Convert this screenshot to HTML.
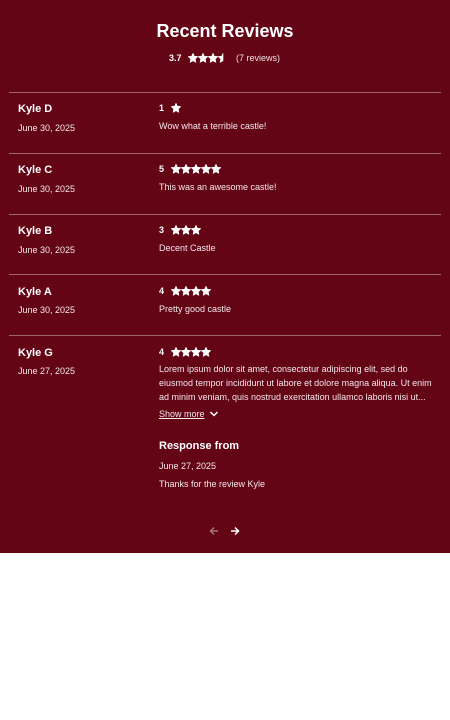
<!DOCTYPE html>
<html><head><meta charset="utf-8"><style>
*{margin:0;padding:0;box-sizing:border-box}
body{width:450px;height:720px;background:#fff;font-family:"Liberation Sans",Arial,sans-serif;position:relative;overflow:hidden}
#r{position:absolute;left:0;top:0;width:450px;height:553px;background:#640515;color:#fff}
.a{position:absolute;white-space:nowrap}
.hr{position:absolute;left:9px;width:432px;height:1px;background:#a0646c}
.n{font-size:11px;font-weight:bold;left:18px}
.d{font-size:9px;left:18px;color:#f4e8ea}
.s{font-size:9px;font-weight:bold;left:159px}
.c{font-size:9px;left:159px;color:#f4e8ea}
svg.st{position:absolute}
</style></head><body><div id="r">
<svg width="0" height="0" style="position:absolute"><defs><path id="st" d="M5 0.3L6.4 3.2 9.7 3.6 7.3 5.9 7.9 9.3 5 7.7 2.1 9.3 2.7 5.9 0.3 3.6 3.6 3.2Z" fill="#fff" stroke="#fff" stroke-width="0.6" stroke-linejoin="round"/></defs></svg>
<div class="a" style="left:0;width:450px;text-align:center;top:21px;font-size:18px;font-weight:bold">Recent Reviews</div>
<div class="a" style="left:169px;top:53px;font-size:9px;font-weight:bold">3.7</div>
<svg class="st" style="left:188px;top:53px" width="40" height="10"><use href="#st"/><use href="#st" x="10"/><use href="#st" x="20"/><path d="M35 0.3L33.6 3.2 30.3 3.6 32.7 5.9 32.1 9.3 35 7.7Z" fill="#fff" stroke="#fff" stroke-width="0.6" stroke-linejoin="round"/></svg>
<div class="a" style="left:236px;top:53px;font-size:9px;color:#f0e0e3">(7 reviews)</div>

<div class="hr" style="top:92px"></div>
<div class="a n" style="top:103px">Kyle D</div>
<div class="a d" style="top:123px">June 30, 2025</div>
<div class="a s" style="top:103px">1</div>
<svg class="st" style="left:171px;top:103px" width="50" height="10"><use href="#st"/></svg>
<div class="a c" style="top:121px">Wow what a terrible castle!</div>

<div class="hr" style="top:153px"></div>
<div class="a n" style="top:164px">Kyle C</div>
<div class="a d" style="top:184px">June 30, 2025</div>
<div class="a s" style="top:164px">5</div>
<svg class="st" style="left:171px;top:164px" width="50" height="10"><use href="#st"/><use href="#st" x="10"/><use href="#st" x="20"/><use href="#st" x="30"/><use href="#st" x="40"/></svg>
<div class="a c" style="top:182px">This was an awesome castle!</div>

<div class="hr" style="top:214px"></div>
<div class="a n" style="top:225px">Kyle B</div>
<div class="a d" style="top:245px">June 30, 2025</div>
<div class="a s" style="top:225px">3</div>
<svg class="st" style="left:171px;top:225px" width="50" height="10"><use href="#st"/><use href="#st" x="10"/><use href="#st" x="20"/></svg>
<div class="a c" style="top:243px">Decent Castle</div>

<div class="hr" style="top:274px"></div>
<div class="a n" style="top:286px">Kyle A</div>
<div class="a d" style="top:305px">June 30, 2025</div>
<div class="a s" style="top:286px">4</div>
<svg class="st" style="left:171px;top:286px" width="50" height="10"><use href="#st"/><use href="#st" x="10"/><use href="#st" x="20"/><use href="#st" x="30"/></svg>
<div class="a c" style="top:304px">Pretty good castle</div>

<div class="hr" style="top:335px"></div>
<div class="a n" style="top:347px">Kyle G</div>
<div class="a d" style="top:366px">June 27, 2025</div>
<div class="a s" style="top:347px">4</div>
<svg class="st" style="left:171px;top:347px" width="50" height="10"><use href="#st"/><use href="#st" x="10"/><use href="#st" x="20"/><use href="#st" x="30"/></svg>
<div class="a c" style="top:362px;line-height:14px">Lorem ipsum dolor sit amet, consectetur adipiscing elit, sed do<br>eiusmod tempor incididunt ut labore et dolore magna aliqua. Ut enim<br>ad minim veniam, quis nostrud exercitation ullamco laboris nisi ut...</div>
<div class="a c" style="top:409px;text-decoration:underline">Show more</div>
<svg class="st" style="left:209px;top:410px" width="10" height="8"><path d="M1.5 2L5 5.5 8.5 2" stroke="#fff" stroke-width="1.5" fill="none"/></svg>
<div class="a" style="left:159px;top:440px;font-size:11px;font-weight:bold">Response from</div>
<div class="a c" style="top:461px">June 27, 2025</div>
<div class="a c" style="top:479px">Thanks for the review Kyle</div>

<svg class="st" style="left:209px;top:526px" width="10" height="10"><path d="M9 5H1.5M5 1.5L1.5 5 5 8.5" stroke="#a8707a" stroke-width="1.5" fill="none"/></svg>
<svg class="st" style="left:230px;top:526px" width="10" height="10"><path d="M1 5H8.5M5 1.5L8.5 5 5 8.5" stroke="#fff" stroke-width="1.5" fill="none"/></svg>
</div></body></html>
